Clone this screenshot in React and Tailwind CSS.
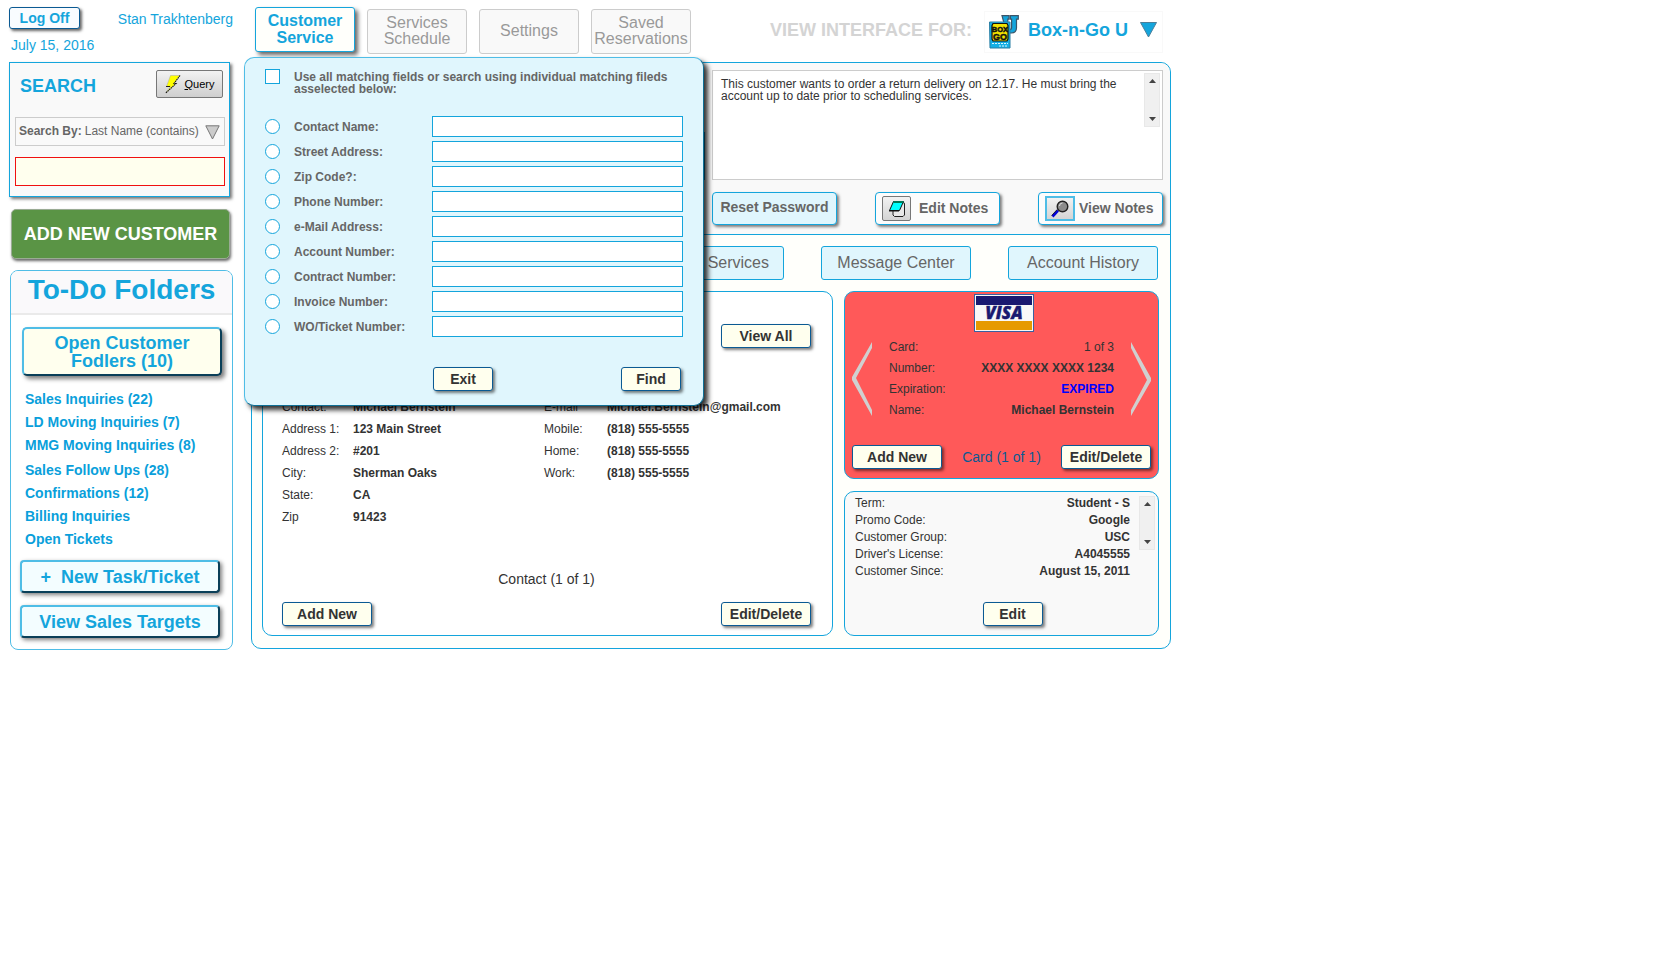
import React from "react";

const FIELDS = [
  "Contact Name:",
  "Street Address:",
  "Zip Code?:",
  "Phone Number:",
  "e-Mail Address:",
  "Account Number:",
  "Contract Number:",
  "Invoice Number:",
  "WO/Ticket Number:",
];

const INQUIRIES = ["Sales Inquiries (22)", "LD Moving Inquiries (7)", "MMG Moving Inquiries (8)"];
const TASKS = ["Sales Follow Ups (28)", "Confirmations (12)", "Billing Inquiries", "Open Tickets"];

const ADDRESS = [
  ["Contact:", "Michael Bernstein"],
  ["Address 1:", "123 Main Street"],
  ["Address 2:", "#201"],
  ["City:", "Sherman Oaks"],
  ["State:", "CA"],
  ["Zip", "91423"],
];

const PHONES = [
  ["E-mail", "Michael.Bernstein@gmail.com"],
  ["Mobile:", "(818) 555-5555"],
  ["Home:", "(818) 555-5555"],
  ["Work:", "(818) 555-5555"],
];

const CARD = [
  ["Card:", "1 of 3", ""],
  ["Number:", "XXXX XXXX XXXX 1234", "font-bold"],
  ["Expiration:", "EXPIRED", "font-bold text-[#0000ff]"],
  ["Name:", "Michael Bernstein", "font-bold"],
];

const ACCOUNT = [
  ["Term:", "Student - S"],
  ["Promo Code:", "Google"],
  ["Customer Group:", "USC"],
  ["Driver's License:", "A4045555"],
  ["Customer Since:", "August 15, 2011"],
];

function SmallButton({ children, wide = true }) {
  return (
    <button
      type="button"
      className={`${wide ? "w-[90px]" : "w-[60px]"} h-6 shrink-0 whitespace-nowrap rounded-[3px] border border-[#0b5a93] bg-[#ffffee] text-sm leading-[22px] font-bold text-[#333] shadow-[2px_2px_3px_rgba(0,0,0,0.5)]`}
    >
      {children}
    </button>
  );
}

function Scroller() {
  return (
    <div
      aria-hidden="true"
      className="flex h-[54px] w-4 shrink-0 flex-col items-center justify-between border border-[#e8e8e8] bg-[#f0f0f0] py-[5px]"
    >
      <svg width="7" height="4" viewBox="0 0 7 4"><path d="M3.5 0 7 4H0z" fill="#444" /></svg>
      <svg width="7" height="4" viewBox="0 0 7 4"><path d="M0 0h7L3.5 4z" fill="#444" /></svg>
    </div>
  );
}

function BoltIcon() {
  return (
    <svg width="16" height="19" viewBox="0 0 16 19" aria-hidden="true">
      <path d="M5.500.5H15L9 8.500H11L.8 18 5.500 11.500H1.500z" fill="#ff0" stroke="#aaa" strokeWidth=".5" />
      <path d="M15 .5 9 8.500H11L.5 18.200" fill="none" stroke="#111" strokeWidth="1.100" strokeDasharray="1.500 .7" />
      <path d="M1 11.500h4" fill="none" stroke="#111" strokeWidth=".9" />
    </svg>
  );
}

function NotepadIcon() {
  return (
    <svg width="18" height="18" viewBox="0 0 18 18" aria-hidden="true">
      <path d="M13 2.500h2q1.500 0 1.500 1.500v11l-1.500 1.500H6.500L5 15v-4z" fill="#e8e8e8" stroke="#222" />
      <path d="M5.500 1.500h10L11.500 10.500H1.500z" fill="#0ff" stroke="#111" />
      <path d="M5.500 2h10" stroke="#075" strokeWidth="2" />
      <path d="M1 10.800h10" stroke="#111" strokeWidth="1.400" />
    </svg>
  );
}

function MagnifierIcon() {
  return (
    <svg width="18" height="18" viewBox="0 0 18 18" aria-hidden="true">
      <path d="m1.500 16.500 5.500-6" stroke="#0000d8" strokeWidth="2.600" />
      <path d="m.6 15.600 5.500-6" stroke="#111" strokeWidth=".8" />
      <circle cx="11.500" cy="6.500" r="5.300" fill="#8c8c8c" stroke="#222" strokeWidth="1.400" />
      <path d="M8.500 6a3 3 0 0 1 3-3" fill="none" stroke="#ddd" />
    </svg>
  );
}

function BrandLogo() {
  return (
    <svg width="30" height="34" viewBox="0 0 30 34" aria-hidden="true">
      <path d="M13 .7h7v3.500h-1.200v8q0 2.300 1.900 2.300t1.900-2.300v-8h-1.200V.7h7.900v3.500H27.500v8.500q0 5-5 5.300h-5z" fill="#14a5dc" stroke="#3c5568" strokeWidth="1.200" />
      <path d="M.5 7h20.500v26H1z" fill="#14b0e6" stroke="#2a7ea3" />
      <path d="M4 8.500h14l1 2V24l-1 2H4l-1-2V10.500z" fill="#f2e200" stroke="#111" strokeWidth="1.200" />
      <text x="11" y="17" textAnchor="middle" fontSize="7.500" fontWeight="700" fill="#111" stroke="#111" strokeWidth=".5" fontFamily="Liberation Sans, sans-serif">BOX</text>
      <text x="11" y="25" textAnchor="middle" fontSize="9" fontWeight="700" fill="#111" stroke="#111" strokeWidth=".5" fontFamily="Liberation Sans, sans-serif">GO</text>
      <path d="M3 28.500h16M10 31h9" stroke="#d8f4ff" strokeWidth="1" strokeDasharray="2 1" />
    </svg>
  );
}

function VisaLogo() {
  return (
    <svg width="60" height="38" viewBox="0 0 60 38" role="img" aria-label="VISA" className="block">
      <rect x=".5" y=".5" width="59" height="37" fill="#f8f8f8" stroke="#3a5fa0" />
      <rect x="2" y="2" width="56" height="9" fill="#191970" />
      <rect x="2" y="27" width="56" height="9" fill="#e69a00" />
      <text x="30" y="25" textAnchor="middle" fontSize="17" fontWeight="800" fontStyle="italic" fill="#191970" stroke="#191970" strokeWidth=".4" fontFamily="Open Sans, sans-serif">VISA</text>
    </svg>
  );
}

function Chevron({ left, label }) {
  return (
    <button type="button" aria-label={label} className="shrink-0">
      <svg width="20" height="74" viewBox="0 0 20 74" className="block">
        <path d={left ? "M20 0v6L4 36l16 32v6L0 38v-3z" : "M0 0v6l16 32L0 68v6l20-35v-3z"} fill="#d0d0d0" />
      </svg>
    </button>
  );
}

function Sidebar() {
  return (
    <aside className="w-56 shrink-0">
      <div className="flex items-start justify-between">
        <button
          type="button"
          className="h-[22px] w-[71px] rounded-[3px] border border-[#0b5a93] bg-[#f9fcff] text-sm leading-[18px] font-bold text-[#14a5dc] shadow-[2px_2px_3px_rgba(0,0,0,0.6)]"
        >
          Log Off
        </button>
        <span className="text-sm leading-6 whitespace-nowrap">Stan Trakhtenberg</span>
      </div>
      <p className="mt-1 pl-0.5 text-sm leading-5">July 15, 2016</p>

      <section className="mt-[7px] mr-[3px] border border-[#14a5dc] bg-[#f9f9f9] pt-[7px] pr-1 pb-[10px] pl-[5px] shadow-[2px_2px_3px_rgba(0,0,0,0.55)]">
        <div className="flex items-end justify-between pr-0.5 pl-[5px]">
          <h2 className="text-lg leading-6 font-bold">SEARCH</h2>
          <button
            type="button"
            className="flex h-7 w-[67px] items-center justify-center gap-1 rounded-[2px] border border-[#777] bg-linear-to-b from-[#f2f2f2] to-[#cfcfcf] text-[11px] text-black"
          >
            <BoltIcon />
            <span><u>Q</u>uery</span>
          </button>
        </div>
        <div className="mt-[19px] flex h-[29px] items-center border border-[#ccc] pr-1 pb-0.5 pl-[3px] text-xs text-[#666]">
          <label htmlFor="search-by" className="shrink-0 font-bold">Search By:</label>
          <select id="search-by" className="min-w-0 flex-1 appearance-none bg-transparent pl-[3px] outline-none">
            <option>Last Name (contains)</option>
          </select>
          <svg width="15" height="15" viewBox="0 0 15 15" className="mt-1 shrink-0" aria-hidden="true">
            <path d="M.8.8h13.400L7.500 14z" fill="#ccc" stroke="#777" />
          </svg>
        </div>
        <input
          type="text"
          aria-label="Search text"
          className="mt-[11px] block h-[29px] w-full border border-[#f01010] bg-[#ffffee] px-1 text-sm text-[#333] outline-none"
        />
      </section>

      <button
        type="button"
        className="mt-3 ml-0.5 block h-[50px] w-[219px] rounded-[5px] border border-[#9aab94] bg-[#5a9445] text-lg font-bold whitespace-nowrap text-white shadow-[1px_2px_3px_rgba(0,0,0,0.6)]"
      >
        ADD NEW CUSTOMER
      </button>

      <section className="mt-[11px] ml-px overflow-hidden rounded-lg border border-[#4fbde6] pb-[11px]">
        <h2 className="h-11 border-b-2 border-[#eaeaea] bg-[#faf9fb] text-center text-[28px] leading-[38px] font-bold">
          To-Do Folders
        </h2>
        <div className="pr-[10px] pl-[11px]">
          <button
            type="button"
            className="mt-3 block h-[49px] w-full rounded-[5px] border-2 border-t-[#4fbde6] border-r-[#0a3f58] border-b-[#0a3f58] border-l-[#4fbde6] bg-[#ffffee] text-lg leading-[18px] font-bold shadow-[3px_3px_4px_rgba(0,0,0,0.5)]"
          >
            Open Customer<br />Fodlers (10)
          </button>
        </div>
        <nav className="mt-3 pl-3.5 text-sm leading-[23px] font-bold text-[#0a9fdb]">
          <ul>
            {INQUIRIES.map((t) => (
              <li key={t}><a href="#inquiries">{t}</a></li>
            ))}
          </ul>
          <ul className="mt-0.5">
            {TASKS.map((t) => (
              <li key={t}><a href="#tasks">{t}</a></li>
            ))}
          </ul>
        </nav>
        <div className="mt-[9px] flex flex-col gap-3 pr-3 pl-[9px]">
          {["+\u00a0 New Task/Ticket", "View Sales Targets"].map((t) => (
            <button
              key={t}
              type="button"
              className="h-[33px] rounded-[4px] border-2 border-t-[#4fbde6] border-r-[#0a3f58] border-b-[#0a3f58] border-l-[#4fbde6] bg-[#f3fdff] text-lg leading-[28px] font-bold whitespace-nowrap shadow-[2px_2px_4px_rgba(0,0,0,0.5)]"
            >
              {t}
            </button>
          ))}
        </div>
      </section>
    </aside>
  );
}

function TopBar() {
  return (
    <header className="flex h-[55px] items-start justify-between pr-2 pl-1">
      <nav className="flex gap-3">
        <button
          type="button"
          className="h-[45px] w-[100px] rounded-[3px] border border-[#14a5dc] bg-[#fffffb] pb-0.5 text-base leading-[17px] font-bold text-[#14a5dc] shadow-[3px_3px_4px_rgba(0,0,0,0.6)]"
        >
          Customer<br />Service
        </button>
        {["Services Schedule", "Settings", "Saved Reservations"].map((t) => (
          <button
            key={t}
            type="button"
            className="mt-0.5 h-[45px] w-[100px] rounded-[3px] border border-[#ccc] bg-[#f9f9f9] pb-0.5 text-base leading-4 text-[#999]"
          >
            {t}
          </button>
        ))}
      </nav>
      <div className="mt-1 flex h-[42px] items-center">
        <span id="view-for" className="mr-3 pb-1 text-lg font-bold whitespace-nowrap text-[#d4d4d4]">VIEW INTERFACE FOR:</span>
        <button
          type="button"
          aria-labelledby="view-for brand"
          className="flex h-[42px] w-[179px] items-center border border-[#f9f9f9] pl-1 text-lg font-bold whitespace-nowrap text-[#14a5dc]"
        >
          <BrandLogo />
          <span id="brand" className="ml-[9px] pb-1">Box-n-Go U</span>
          <svg width="17" height="16" viewBox="0 0 17 16" className="mb-1 ml-3" aria-hidden="true">
            <path d="M.5.5h16L8.500 15z" fill="#14a5dc" stroke="#4b7f9a" />
          </svg>
        </button>
      </div>
    </header>
  );
}

function FindDialog() {
  return (
    <form
      role="dialog"
      aria-label="Customer search"
      className="absolute top-[50px] -left-[7px] w-[460px] rounded-[10px] border border-t-[#4fbde6] border-r-[#0f6f95] border-b-[#0f6f95] border-l-[#4fbde6] bg-[#e0f6fd] px-5 pt-[11px] pb-[14px] text-xs font-bold text-[#666] shadow-[4px_4px_5px_rgba(0,0,0,0.8)]"
    >
      <div className="flex items-start gap-3.5">
        <input id="use-all" type="checkbox" className="h-[15px] w-[15px] shrink-0 appearance-none border border-[#14a5dc] bg-white" />
        <label htmlFor="use-all" className="pt-0.5 leading-3">
          Use all matching fields or search using individual matching fileds<br />asselected below:
        </label>
      </div>
      <div className="mt-[21px] flex flex-col gap-1">
        {FIELDS.map((f, i) => (
          <div key={f} className="flex h-[21px] items-center">
            <input
              id={`pick-${i}`}
              type="radio"
              name="field"
              className="h-[15px] w-[15px] shrink-0 appearance-none rounded-full border border-[#14a5dc] bg-white"
            />
            <label htmlFor={`pick-${i}`} className="ml-3.5 w-[138px] shrink-0">{f}</label>
            <input
              type="text"
              aria-label={f}
              className="h-[21px] w-[251px] border border-[#14a5dc] bg-white px-1 font-normal text-[#333] outline-none"
            />
          </div>
        ))}
      </div>
      <div className="mt-[30px] flex justify-between pr-0.5 pl-[168px]">
        <SmallButton wide={false}>Exit</SmallButton>
        <SmallButton wide={false}>Find</SmallButton>
      </div>
    </form>
  );
}

function NotesHeader() {
  const btn =
    "flex h-[33px] w-[125px] items-center whitespace-nowrap rounded-[4px] border border-[#14a5dc] text-sm font-bold text-[#666] shadow-[2px_2px_3px_rgba(0,0,0,0.5)]";
  return (
    <div className="flex items-start gap-[7px] rounded-t-[10px] border-b border-[#14a5dc] bg-[#f9f9f9] pt-[7px] pr-[7px] pb-[9px] pl-[10px]">
      <div className="mt-[62px] h-12 flex-1 border border-[#14a5dc] bg-white" />
      <div className="w-[451px]">
        <div className="flex h-[110px] items-start border border-[#ccc] bg-white pt-0.5 pr-0.5">
          <textarea
            readOnly
            aria-label="Customer notes"
            className="h-[100px] flex-1 resize-none overflow-hidden pt-[5px] pl-2 text-xs leading-3 text-[#333] outline-none"
            defaultValue="This customer wants to order a return delivery on 12.17. He must bring the account up to date prior to scheduling services."
          />
          <Scroller />
        </div>
        <div className="mt-3 flex justify-between">
          <button type="button" className={`${btn} justify-center bg-[#e0f6fd] pb-1`}>Reset Password</button>
          <button type="button" className={`${btn} gap-2 bg-[#fcfcfc] pl-1.5`}>
            <span className="flex h-[25px] w-[29px] items-center justify-center rounded-[2px] border border-[#777] bg-linear-to-b from-[#f2f2f2] to-[#d4d4d4]">
              <NotepadIcon />
            </span>
            <span className="pb-0.5">Edit Notes</span>
          </button>
          <button type="button" className={`${btn} gap-1 bg-[#fcfcfc] pl-1.5`}>
            <span className="flex h-[25px] w-[30px] items-center justify-center border-2 border-[#4fbde6] bg-linear-to-b from-[#f2f2f2] to-[#d4d4d4]">
              <MagnifierIcon />
            </span>
            <span className="pb-0.5">View Notes</span>
          </button>
        </div>
      </div>
    </div>
  );
}

function ContactPanel() {
  return (
    <section className="flex flex-col rounded-[10px] border border-[#14a5dc] bg-white pr-[21px] pb-[9px] pl-[19px] text-[#333]">
      <div className="mt-8 flex justify-end">
        <SmallButton>View All</SmallButton>
      </div>
      <div className="mt-12 grid grid-cols-[262px_1fr] text-xs leading-[22px]">
        <dl className="grid grid-cols-[71px_1fr] content-start">
          {ADDRESS.map(([k, v]) => (
            <React.Fragment key={k}>
              <dt>{k}</dt>
              <dd className="font-bold">{v}</dd>
            </React.Fragment>
          ))}
        </dl>
        <dl className="grid grid-cols-[63px_1fr] content-start">
          {PHONES.map(([k, v]) => (
            <React.Fragment key={k}>
              <dt>{k}</dt>
              <dd className="font-bold">{v}</dd>
            </React.Fragment>
          ))}
        </dl>
      </div>
      <p className="mt-auto text-center text-sm leading-5">Contact (1 of 1)</p>
      <div className="mt-[13px] flex justify-between">
        <SmallButton>Add New</SmallButton>
        <SmallButton>Edit/Delete</SmallButton>
      </div>
    </section>
  );
}

function CardPanel() {
  return (
    <section className="rounded-[10px] border border-[#14a5dc] bg-[#ff5959] px-[7px] pt-0.5 pb-[9px] text-[#333]">
      <div className="flex justify-center pl-1">
        <VisaLogo />
      </div>
      <div className="mt-[5px] flex items-center gap-[17px]">
        <Chevron left label="Previous card" />
        <dl className="flex-1 text-xs leading-[21px]">
          {CARD.map(([k, v, cls]) => (
            <div key={k} className="flex justify-between">
              <dt>{k}</dt>
              <dd className={cls}>{v}</dd>
            </div>
          ))}
        </dl>
        <Chevron label="Next card" />
      </div>
      <div className="mt-6 flex items-center justify-between">
        <SmallButton>Add New</SmallButton>
        <span className="text-sm leading-5 text-[#0b5a93]">Card (1 of 1)</span>
        <SmallButton>Edit/Delete</SmallButton>
      </div>
    </section>
  );
}

function AccountPanel() {
  return (
    <section className="rounded-[10px] border border-[#14a5dc] bg-[#f9f9f9] pt-[3px] pb-[9px] text-[#333]">
      <div className="flex items-start gap-[9px] pr-[3px] pl-[10px]">
        <dl className="flex-1 text-xs leading-[17px]">
          {ACCOUNT.map(([k, v]) => (
            <div key={k} className="flex justify-between">
              <dt>{k}</dt>
              <dd className="font-bold">{v}</dd>
            </div>
          ))}
        </dl>
        <div className="pt-px"><Scroller /></div>
      </div>
      <div className="mt-[22px] flex justify-center pl-[22px]">
        <SmallButton wide={false}>Edit</SmallButton>
      </div>
    </section>
  );
}

export default function App() {
  const tab = "h-[34px] w-[150px] rounded-[3px] border border-[#14a5dc] bg-[#e0f6fd] text-base leading-7 text-[#666]";
  return (
    <div
      className="flex max-w-[1171px] items-start gap-[18px] bg-white pt-[7px] pl-[9px] text-[#14a5dc]"
      style={{ fontFamily: '"Liberation Sans", Arial, sans-serif' }}
    >
      <Sidebar />
      <div className="relative min-w-0 flex-1">
        <TopBar />
        <main className="rounded-[10px] border border-[#14a5dc] bg-[#fffffb]">
          <NotesHeader />
          <nav className="flex justify-end gap-[37px] pt-[11px] pr-3">
            <button type="button" className={`${tab} pr-3.5 text-right`}>Services</button>
            <button type="button" className={tab}>Message Center</button>
            <button type="button" className={tab}>Account History</button>
          </nav>
          <div className="grid grid-cols-[1fr_315px] gap-[11px] pt-[11px] pr-[11px] pb-3 pl-[10px]">
            <ContactPanel />
            <div className="flex flex-col gap-3">
              <CardPanel />
              <AccountPanel />
            </div>
          </div>
        </main>
        <FindDialog />
      </div>
    </div>
  );
}
